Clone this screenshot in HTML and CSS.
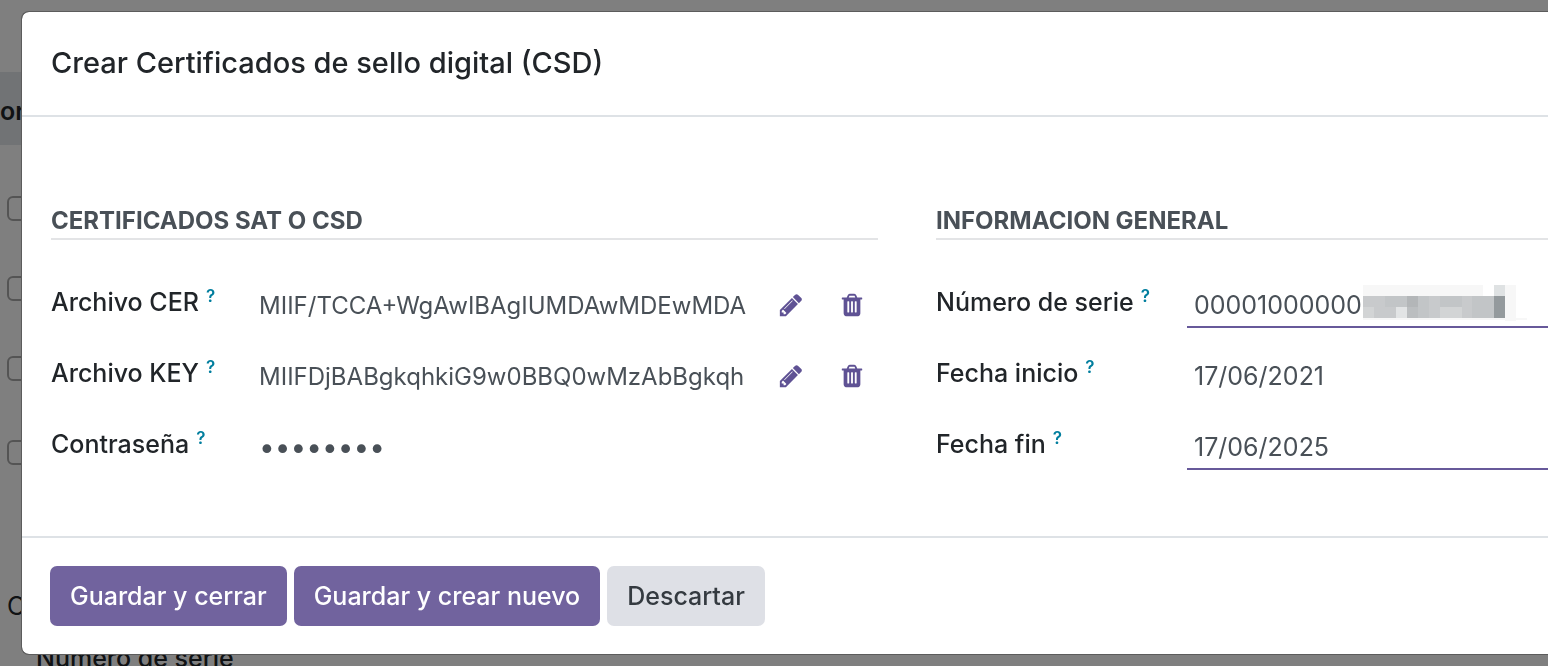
FILE: index.html
```html
<!DOCTYPE html>
<html lang="es">
<head>
<meta charset="utf-8">
<title>Crear Certificados de sello digital (CSD)</title>
<link rel="stylesheet" href="styles.css">
</head>
<body>
<svg class="sprite" aria-hidden="true">
  <symbol id="pencil" viewBox="0 0 1792 1792"><path d="M491 1536l91-91-235-235-91 91v107h128v128h107zm523-928q0-22-22-22-10 0-17 7l-542 542q-7 7-7 17 0 22 22 22 10 0 17-7l542-542q7-7 7-17zm-54-192l416 416-832 832h-416v-416zm683 96q0 53-37 90l-166 166-416-416 166-165q36-38 90-38 53 0 91 38l235 234q37 39 37 91z"/></symbol>
  <symbol id="trash" viewBox="0 0 1792 1792"><path d="M704 1376v-704q0-14-9-23t-23-9h-64q-14 0-23 9t-9 23v704q0 14 9 23t23 9h64q14 0 23-9t9-23zm256 0v-704q0-14-9-23t-23-9h-64q-14 0-23 9t-9 23v704q0 14 9 23t23 9h64q14 0 23-9t9-23zm256 0v-704q0-14-9-23t-23-9h-64q-14 0-23 9t-9 23v704q0 14 9 23t23 9h64q14 0 23-9t9-23zm-544-992h448l-48-117q-7-9-17-11h-317q-10 2-17 11zm928 32v64q0 14-9 23t-23 9h-96v948q0 83-47 143.500t-113 60.500h-832q-66 0-113-58.500t-47-141.500v-952h-96q-14 0-23-9t-9-23v-64q0-14 9-23t23-9h309l70-167q15-37 54-63t79-26h320q40 0 79 26t54 63l70 167h309q14 0 23 9t9 23z"/></symbol>
</svg>

<div class="page">
  <div class="page-head">or</div>
  <div class="page-rows">
    <input type="checkbox" class="check" aria-label="Seleccionar fila 1">
    <input type="checkbox" class="check" aria-label="Seleccionar fila 2">
    <input type="checkbox" class="check" aria-label="Seleccionar fila 3">
    <input type="checkbox" class="check" aria-label="Seleccionar fila 4">
  </div>
  <div class="page-group">C</div>
  <div class="page-field">Número de serie</div>
</div>

<div class="backdrop">
  <div class="dialog" role="dialog" aria-modal="true" aria-labelledby="dialog-title">
    <header class="dialog-header">
      <h1 class="dialog-title" id="dialog-title">Crear Certificados de sello digital (CSD)</h1>
    </header>
    <form class="dialog-body">
      <section class="group">
        <h2 class="group-title">CERTIFICADOS SAT O CSD</h2>
        <div class="fields fields-files">
          <div class="field">
            <label class="label" for="cer">Archivo CER<sup class="help">?</sup></label>
            <input class="value encoded" id="cer" type="text" value="MIIF/TCCA+WgAwIBAgIUMDAwMDEwMDA">
            <button class="icon-button" type="button" aria-label="Editar archivo CER"><svg class="icon"><use href="#pencil"/></svg></button>
            <button class="icon-button" type="button" aria-label="Borrar archivo CER"><svg class="icon"><use href="#trash"/></svg></button>
          </div>
          <div class="field">
            <label class="label" for="key">Archivo KEY<sup class="help">?</sup></label>
            <input class="value encoded" id="key" type="text" value="MIIFDjBABgkqhkiG9w0BBQ0wMzAbBgkqh">
            <button class="icon-button" type="button" aria-label="Editar archivo KEY"><svg class="icon"><use href="#pencil"/></svg></button>
            <button class="icon-button" type="button" aria-label="Borrar archivo KEY"><svg class="icon"><use href="#trash"/></svg></button>
          </div>
          <div class="field">
            <label class="label" for="password">Contraseña<sup class="help">?</sup></label>
            <input class="value secret" id="password" type="password" value="12345678">
          </div>
        </div>
      </section>
      <section class="group">
        <h2 class="group-title">INFORMACION GENERAL</h2>
        <div class="fields fields-info">
          <div class="field">
            <label class="label" for="serial">Número de serie<sup class="help">?</sup></label>
            <div class="masked">
              <input class="value underlined" id="serial" type="text" value="00001000000">
              <svg class="mosaic" viewBox="0 0 165 36" shape-rendering="crispEdges" aria-hidden="true">
                <path fill="#f7f7f7" d="M0 0h120v11H0zM142 0h11v36h-11zM0 33h164v2H0z"/>
                <path fill="#c8cacc" d="M0 11h142v22H0z"/>
                <path fill="#c2c5c7" d="M22 11h22v11H22zM55 11h11v22H55zM77 11h22v11H77zM109 11h22v22h-22z"/>
                <path fill="#b3b6b8" d="M44 11h11v11H44z"/>
                <path fill="#bbbec0" d="M44 22h11v11H44z"/>
                <path fill="#e2e4e5" d="M33 22h11v11H33z"/>
                <path fill="#d2d4d5" d="M0 22h11v11H0zM77 22h22v11H77z"/>
                <path fill="#dfe2e3" d="M131 0h11v11h-11z"/>
                <path fill="#949a9d" d="M131 11h11v22h-11z"/>
              </svg>
            </div>
          </div>
          <div class="field">
            <label class="label" for="start">Fecha inicio<sup class="help">?</sup></label>
            <input class="value" id="start" type="text" value="17/06/2021">
          </div>
          <div class="field">
            <label class="label" for="end">Fecha fin<sup class="help">?</sup></label>
            <input class="value underlined" id="end" type="text" value="17/06/2025">
          </div>
        </div>
      </section>
    </form>
    <footer class="dialog-footer">
      <button class="button primary" type="button">Guardar y cerrar</button>
      <button class="button primary" type="button">Guardar y crear nuevo</button>
      <button class="button secondary" type="button">Descartar</button>
    </footer>
  </div>
</div>
</body>
</html>
```
FILE: styles.css
```css
* {
  box-sizing: border-box;
}

body {
  margin: 0;
  overflow: hidden;
  background: #fff;
  color: #212529;
  font-family: Inter, "Liberation Sans", sans-serif;
  font-size: 25px;
  line-height: 32px;
}

.sprite {
  display: none;
}

/* List behind the dialog */
.page {
  height: 100vh;
  padding-top: 72px;
  white-space: nowrap;
}

.page-head {
  height: 73px;
  padding-top: 23px;
  background: #e3e6ea;
  font-weight: 600;
}

.page-rows {
  display: flex;
  flex-direction: column;
  gap: 55px;
  padding: 51px 7px 0;
}

.check {
  appearance: none;
  width: 25px;
  height: 25px;
  margin: 0;
  border: 2px solid #a8a8a8;
  border-radius: 6px;
}

.check:last-child {
  margin-top: 4px;
}

.page-group {
  padding: 125px 0 0 7px;
}

.page-field {
  padding: 20px 0 0 36px;
  font-weight: 500;
}

/* Dialog */
.backdrop {
  position: fixed;
  inset: 0;
  padding: 11px 0 0 21px;
  background: rgba(0, 0, 0, 0.5);
}

.dialog {
  border: 1px solid #5c5c5c;
  border-right: 0;
  border-radius: 8px 0 0 8px;
  background: #fff;
  background-clip: padding-box;
}

.dialog-header {
  padding: 31px 29px 32px;
  border-bottom: 2px solid #dee2e6;
}

.dialog-title {
  margin: 0;
  font-size: 29px;
  font-weight: 500;
  line-height: 40px;
}

.dialog-body {
  display: grid;
  grid-template-columns: 827fr 612fr;
  gap: 58px;
  padding: 88px 0 66px 29px;
}

.group {
  min-width: 0;
}

.group-title {
  margin: 0;
  padding-bottom: 1px;
  border-bottom: 2px solid #e3e4e6;
  color: #495057;
  font-size: 24px;
  font-weight: 700;
  line-height: 32px;
}

.fields {
  display: grid;
  gap: 17px;
  padding-top: 34px;
}

.field {
  display: grid;
  align-items: start;
}

.fields-files .field {
  grid-template-columns: 208px 1fr 60px 61px;
  padding-right: 7px;
}

.fields-info .field {
  grid-template-columns: 251px 1fr;
}

.label {
  padding-top: 12px;
  font-weight: 500;
}

.help {
  margin-left: 7px;
  color: #017e9e;
  font-size: 17px;
  font-weight: 600;
  line-height: 0;
}

.value {
  width: 100%;
  min-width: 0;
  height: 54px;
  padding: 10px 0 0;
  border: 0;
  border-bottom: 2px solid transparent;
  outline: 0;
  background: transparent;
  color: #495057;
  font: inherit;
}

.encoded {
  font-size: 24px;
}

.secret {
  font-size: 28px;
}

.fields-info .value {
  padding-left: 7px;
}

.value.underlined {
  border-bottom-color: #67599a;
}

.masked {
  position: relative;
}

.mosaic {
  position: absolute;
  left: 176px;
  top: 11px;
  width: 165px;
  height: 36px;
}

.icon-button {
  display: flex;
  justify-content: flex-end;
  padding: 18px 6px 0 0;
  border: 0;
  background: none;
  color: #5f5294;
}

.icon {
  width: 26px;
  height: 26px;
  fill: currentColor;
}

.dialog-footer {
  display: flex;
  gap: 7px;
  padding: 28px;
  border-top: 2px solid #dee2e6;
}

.button {
  height: 60px;
  padding: 0 20px;
  border: 0;
  border-radius: 7px;
  font: inherit;
  font-weight: 500;
}

.primary {
  background: #71639e;
  color: #fff;
}

.secondary {
  background: #dee0e6;
  color: #343a40;
}
```
